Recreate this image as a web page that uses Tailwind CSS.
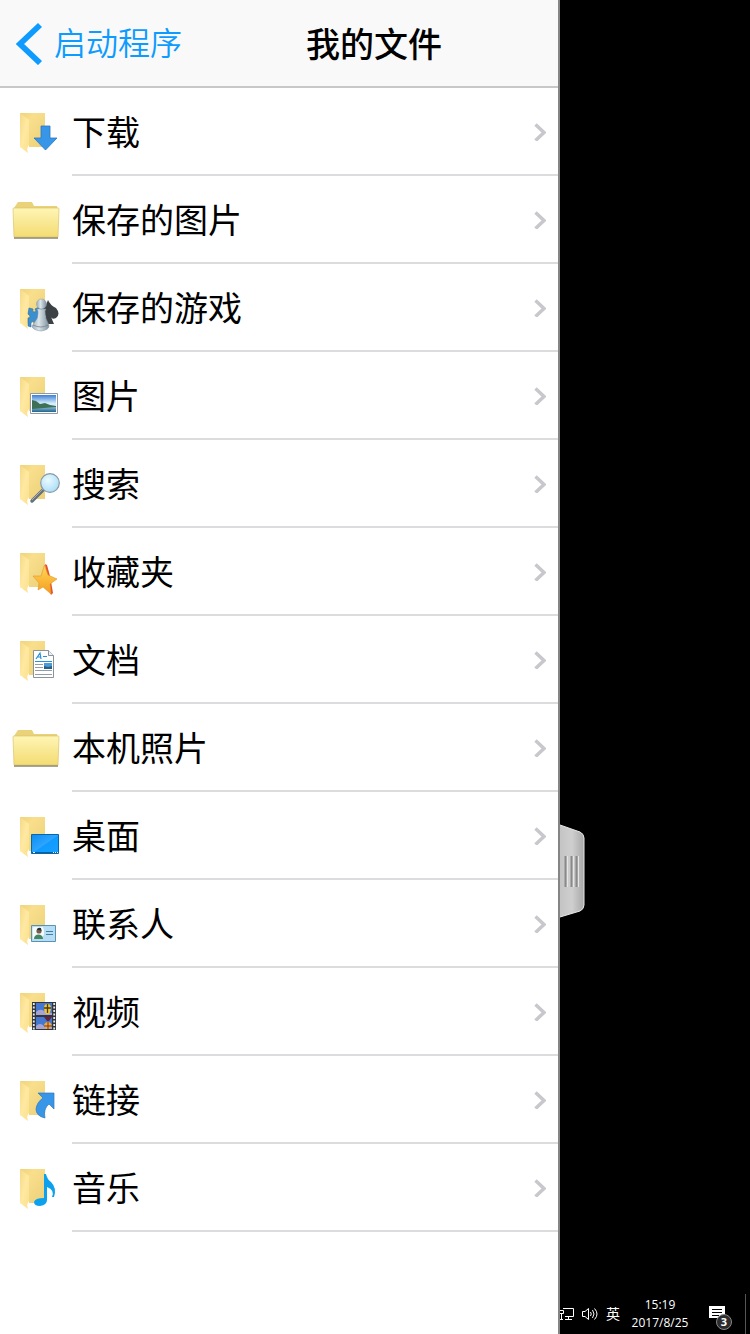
<!DOCTYPE html>
<html lang="zh-CN">
<head>
<meta charset="utf-8">
<meta name="viewport" content="width=device-width, initial-scale=1">
<title>我的文件</title>
<script src="https://cdn.jsdelivr.net/npm/@tailwindcss/browser@4"></script>
</head>
<body class="flex min-h-screen bg-black font-['Noto_Sans_CJK_SC',sans-serif] text-black">

<!-- Shared shapes and gradients -->
<svg class="absolute size-0" aria-hidden="true">
  <defs>
    <linearGradient id="back" x1="0" y1="0" x2="1" y2="1"><stop offset="0" stop-color="#efd27c"/><stop offset=".3" stop-color="#f9df8c"/><stop offset="1" stop-color="#ecd07b"/></linearGradient>
    <linearGradient id="flap" x1="0" y1="0" x2="1" y2="1"><stop offset="0" stop-color="#f4d985"/><stop offset=".5" stop-color="#ffe9a2"/><stop offset="1" stop-color="#fbdf89"/></linearGradient>
    <linearGradient id="front" x1="0" y1="0" x2="0" y2="1"><stop offset="0" stop-color="#fff5b5"/><stop offset="1" stop-color="#f3dc72"/></linearGradient>
    <linearGradient id="sky" x1="0" y1="0" x2="0" y2="1"><stop offset="0" stop-color="#3f7fd6"/><stop offset=".7" stop-color="#d5eefb"/></linearGradient>
    <linearGradient id="sea" x1="0" y1="0" x2="0" y2="1"><stop offset="0" stop-color="#a6cfe0"/><stop offset="1" stop-color="#1e6390"/></linearGradient>
    <linearGradient id="screen" x1="0" y1="0" x2="1" y2="1"><stop offset="0" stop-color="#0c8cf0"/><stop offset=".5" stop-color="#2ea5ff"/><stop offset=".52" stop-color="#129bff"/><stop offset="1" stop-color="#16a0ff"/></linearGradient>
    <linearGradient id="pawn" x1="0" y1="0" x2="1" y2="0"><stop offset="0" stop-color="#9badb9"/><stop offset=".4" stop-color="#dce5ea"/><stop offset="1" stop-color="#7d909d"/></linearGradient>
    <linearGradient id="star" x1="0" y1="0" x2="0" y2="1"><stop offset="0" stop-color="#ffd95a"/><stop offset="1" stop-color="#f59c1c"/></linearGradient>
    <radialGradient id="lens" cx=".4" cy=".35" r=".7"><stop offset="0" stop-color="#eafaff"/><stop offset="1" stop-color="#a9dcf8"/></radialGradient>
    <linearGradient id="grip" x1="0" y1="0" x2="1" y2="0"><stop offset="0" stop-color="#c4c4c4"/><stop offset=".5" stop-color="#cfcfcf"/><stop offset="1" stop-color="#a8a8a8"/></linearGradient>
    <symbol id="open" viewBox="0 0 48 48">
      <path d="M8 5H33V39H17Z" fill="url(#back)"/>
      <path d="M8 5L17 12V36L15 41L16 45L8 39Z" fill="url(#flap)"/>
    </symbol>
    <symbol id="closed" viewBox="0 0 48 48">
      <path d="M2 41V12L4 9L6 6H20L22 10H45L46 14V41Z" fill="#e9d27a"/>
      <path d="M1 13Q1 12 2 12H46Q47 12 47 13L46 41H2Z" fill="url(#front)" stroke="#dcc46a" stroke-width=".7"/>
      <path d="M2 42H46" stroke="#8c8469" stroke-width="1.3"/>
    </symbol>
    <symbol id="next" viewBox="0 0 12 20"><path d="M1.500 3.500L10 11.500L1.500 19.500" fill="none" stroke="#c7c7cc" stroke-width="3.500"/></symbol>
  </defs>
</svg>

<main class="flex min-w-0 flex-1 flex-col border-r-2 border-[#858585] bg-white">
  <header class="flex h-22 items-center border-b-2 border-[#c8c8c8] bg-[#f9f9f9]">
    <a href="#" class="flex w-[190px] shrink-0 items-center gap-3 pl-4 text-[32px] leading-10 font-[350] text-[#0d9bff]">
      <svg class="h-11 w-[26px] shrink-0" viewBox="0 0 26 44" aria-hidden="true"><path d="M24 4L4 23L24 42" fill="none" stroke="#0d9bff" stroke-width="5.800"/></svg>
      <span class="pb-1 whitespace-nowrap">启动程序</span>
    </a>
    <h1 class="flex-1 text-center text-[34px] leading-10 font-medium">我的文件</h1>
  </header>

  <nav aria-label="我的文件">
    <ul class="text-[34px] leading-10">
      <li><a href="#" class="flex h-22 items-center pl-3">
        <svg class="size-12 shrink-0" viewBox="0 0 48 48" aria-hidden="true"><use href="#open"/><path d="M29 18H38V30H45L33.500 42L22 30H29Z" fill="#3896e8" stroke="#2877c0" stroke-width=".8"/></svg>
        <span class="ml-3 flex h-full flex-1 items-center justify-between border-b-2 border-[#dcdcde] pr-3">下载<svg class="h-5 w-3" aria-hidden="true"><use href="#next"/></svg></span>
      </a></li>
      <li><a href="#" class="flex h-22 items-center pl-3">
        <svg class="size-12 shrink-0" viewBox="0 0 48 48" aria-hidden="true"><use href="#closed"/></svg>
        <span class="ml-3 flex h-full flex-1 items-center justify-between border-b-2 border-[#dcdcde] pr-3">保存的图片<svg class="h-5 w-3" aria-hidden="true"><use href="#next"/></svg></span>
      </a></li>
      <li><a href="#" class="flex h-22 items-center pl-3">
        <svg class="size-12 shrink-0" viewBox="0 0 48 48" aria-hidden="true"><use href="#open"/>
          <path d="M17 24L21 25Q20 28 22 28Q25 28 23 25L27 23V40L22 42V38Q20 36 19 39V43L16 42V34Q20 33 16 30Z" fill="#3c8fce" stroke="#2b6c9f" stroke-width=".6"/>
          <path d="M36 16Q38 21 44 24Q49 30 44 34Q40 36 39 33L42 40H30L34 32Q28 31 30 25Q34 22 36 16Z" fill="#3c4146"/>
          <path d="M25 25H34L33 27Q33 34 36 39L37 42Q37 46 29 47Q20 46 20 42L22 39Q27 34 26 27Z" fill="url(#pawn)" stroke="#8393a0" stroke-width=".5"/>
          <circle cx="29.500" cy="20" r="5" fill="url(#pawn)" stroke="#8797a2" stroke-width=".5"/>
          <path d="M21 41Q29 45 36 41" fill="none" stroke="#71838f" stroke-width=".8"/></svg>
        <span class="ml-3 flex h-full flex-1 items-center justify-between border-b-2 border-[#dcdcde] pr-3">保存的游戏<svg class="h-5 w-3" aria-hidden="true"><use href="#next"/></svg></span>
      </a></li>
      <li><a href="#" class="flex h-22 items-center pl-3">
        <svg class="size-12 shrink-0" viewBox="0 0 48 48" aria-hidden="true"><use href="#open"/>
          <path d="M18.500 21.500H45.500V41.500H18.500Z" fill="#fff" stroke="#8e9ba6"/>
          <path d="M20 23H44V35H20Z" fill="url(#sky)"/><path d="M20 34H44V40H20Z" fill="url(#sea)"/>
          <path d="M20 28L24 29L28 32L33 31L38 33L44 34V35L32 36L20 37Z" fill="#3d7055"/></svg>
        <span class="ml-3 flex h-full flex-1 items-center justify-between border-b-2 border-[#dcdcde] pr-3">图片<svg class="h-5 w-3" aria-hidden="true"><use href="#next"/></svg></span>
      </a></li>
      <li><a href="#" class="flex h-22 items-center pl-3">
        <svg class="size-12 shrink-0" viewBox="0 0 48 48" aria-hidden="true"><use href="#open"/>
          <path d="M31 30L20 41" stroke="#66717a" stroke-width="3.500" stroke-linecap="round"/><path d="M32 28L20 40" stroke="#a5afb5"/>
          <circle cx="38" cy="23" r="9.300" fill="url(#lens)" stroke="#8999a5" stroke-width="1.200"/></svg>
        <span class="ml-3 flex h-full flex-1 items-center justify-between border-b-2 border-[#dcdcde] pr-3">搜索<svg class="h-5 w-3" aria-hidden="true"><use href="#next"/></svg></span>
      </a></li>
      <li><a href="#" class="flex h-22 items-center pl-3">
        <svg class="size-12 shrink-0" viewBox="0 0 48 48" aria-hidden="true"><use href="#open"/>
          <path d="M33 16L35 17L38 28L41 45L39 47L35 37Z" fill="#e5502b"/>
          <path d="M32.500 17L36 27L45 31L38 36L39 46L31 39L26 42L27 35L21 28L29 28Z" fill="url(#star)" stroke="#e49329" stroke-width=".6"/></svg>
        <span class="ml-3 flex h-full flex-1 items-center justify-between border-b-2 border-[#dcdcde] pr-3">收藏夹<svg class="h-5 w-3" aria-hidden="true"><use href="#next"/></svg></span>
      </a></li>
      <li><a href="#" class="flex h-22 items-center pl-3">
        <svg class="size-12 shrink-0" viewBox="0 0 48 48" aria-hidden="true"><use href="#open"/>
          <path d="M21.500 14.500H36.500L41.500 19.500V41.500H21.500Z" fill="#fff" stroke="#88939b"/><path d="M36.500 14.500V19.500H41.500" fill="#edf1f4" stroke="#88939b"/>
          <path d="M24 23L28 17L29 23M25.500 21H29M31 20.500H35" fill="none" stroke="#278fdb" stroke-width="1.200"/>
          <path d="M23 25.500H40" stroke="#278fdb"/><path d="M23 28.500H31M23 31.500H31M23 34.500H40M23 38.500H40" stroke="#929da5"/>
          <path d="M32 27H40V33H32Z" fill="#4c9bd7"/><path d="M32 30L36 31L40 30V33H32Z" fill="#285f83"/></svg>
        <span class="ml-3 flex h-full flex-1 items-center justify-between border-b-2 border-[#dcdcde] pr-3">文档<svg class="h-5 w-3" aria-hidden="true"><use href="#next"/></svg></span>
      </a></li>
      <li><a href="#" class="flex h-22 items-center pl-3">
        <svg class="size-12 shrink-0" viewBox="0 0 48 48" aria-hidden="true"><use href="#closed"/></svg>
        <span class="ml-3 flex h-full flex-1 items-center justify-between border-b-2 border-[#dcdcde] pr-3">本机照片<svg class="h-5 w-3" aria-hidden="true"><use href="#next"/></svg></span>
      </a></li>
      <li><a href="#" class="flex h-22 items-center pl-3">
        <svg class="size-12 shrink-0" viewBox="0 0 48 48" aria-hidden="true"><use href="#open"/>
          <path d="M19.500 22.500H46.500V41.500H19.500Z" fill="url(#screen)" stroke="#0767ad"/><path d="M20 40.500H46" stroke="#075f9f"/><path d="M21 40.500H23M41 40.500H42M43 40.500H44M45 40.500H46" stroke="#fff"/></svg>
        <span class="ml-3 flex h-full flex-1 items-center justify-between border-b-2 border-[#dcdcde] pr-3">桌面<svg class="h-5 w-3" aria-hidden="true"><use href="#next"/></svg></span>
      </a></li>
      <li><a href="#" class="flex h-22 items-center pl-3">
        <svg class="size-12 shrink-0" viewBox="0 0 48 48" aria-hidden="true"><use href="#open"/>
          <path d="M19.500 25.500H43.500V41.500H19.500Z" fill="#b5def5" stroke="#5a92b5"/><path d="M20.500 28Q21 27 22 27H31Q32.500 30 32 34L30 39H21Z" fill="#f5fafc"/>
          <circle cx="27" cy="31" r="2.600" fill="#795d4b"/><path d="M25 30Q25 27 29 28L29.500 31L27 30Z" fill="#24333a"/><path d="M22 39Q22 35 26 34.500Q31 34.500 31 39Z" fill="#458562"/>
          <path d="M34 31.500H41M34 34.500H41" stroke="#467da0"/></svg>
        <span class="ml-3 flex h-full flex-1 items-center justify-between border-b-2 border-[#dcdcde] pr-3">联系人<svg class="h-5 w-3" aria-hidden="true"><use href="#next"/></svg></span>
      </a></li>
      <li><a href="#" class="flex h-22 items-center pl-3">
        <svg class="size-12 shrink-0" viewBox="0 0 48 48" aria-hidden="true"><use href="#open"/>
          <path d="M20 14H44V42H20Z" fill="#30363b"/><path d="M21.800 15V42M42.200 15V42" stroke="#e6ebef" stroke-width="1.800" stroke-dasharray="2 1.500"/>
          <path d="M24 15H40V27H24ZM24 29H40V41H24Z" fill="#4478d0"/>
          <path d="M24 24Q28 20 32 23L40 25V27H24ZM24 38Q28 34 32 38L40 39V41H24Z" fill="#a9a3d0"/>
          <path d="M32 20Q32 16 35.500 16Q39 16 39 20Q39 23 37 26H34Q32 23 32 20Z" fill="#f4c730"/><path d="M35.500 16V25M32 20H39" stroke="#4c3b1d" stroke-width="1.300"/>
          <path d="M32 29H40L37 33H35Z" fill="#6a2038"/>
          <path d="M32 37Q33 34 36 34Q39 34 40 38L37 41H34Z" fill="#e8b02c"/><path d="M32 38H40M36 34V41" stroke="#872b3f"/></svg>
        <span class="ml-3 flex h-full flex-1 items-center justify-between border-b-2 border-[#dcdcde] pr-3">视频<svg class="h-5 w-3" aria-hidden="true"><use href="#next"/></svg></span>
      </a></li>
      <li><a href="#" class="flex h-22 items-center pl-3">
        <svg class="size-12 shrink-0" viewBox="0 0 48 48" aria-hidden="true"><use href="#open"/>
          <path d="M26 17H42V33L37 28Q31 33 33 42Q24 40 24 33Q25 26 31 22Z" fill="#3896e8" stroke="#2b78bf" stroke-width=".7"/></svg>
        <span class="ml-3 flex h-full flex-1 items-center justify-between border-b-2 border-[#dcdcde] pr-3">链接<svg class="h-5 w-3" aria-hidden="true"><use href="#next"/></svg></span>
      </a></li>
      <li><a href="#" class="flex h-22 items-center pl-3">
        <svg class="size-12 shrink-0" viewBox="0 0 48 48" aria-hidden="true"><use href="#open"/>
          <path d="M32 10H34Q35 15 39 18Q45 24 42 33H40Q43 26 35 23V36Q35 41 28 42Q22 42 22 38Q23 34 32 34Z" fill="#0da0ed"/></svg>
        <span class="ml-3 flex h-full flex-1 items-center justify-between border-b-2 border-[#dcdcde] pr-3">音乐<svg class="h-5 w-3" aria-hidden="true"><use href="#next"/></svg></span>
      </a></li>
    </ul>
  </nav>
</main>

<aside class="relative flex w-[190px] shrink-0 flex-col justify-end overflow-hidden text-white">
  <!-- Drawer handle over the remote desktop -->
  <button class="absolute top-[824px] left-0" aria-label="收起面板">
    <svg class="h-[94px] w-[25px]" viewBox="0 0 25 94" aria-hidden="true">
      <path d="M0 1L20 8Q24 10 24 14V81Q24 85 20 87L0 93Z" fill="url(#grip)"/>
      <path d="M0 1L20 8Q24 10 24 14V81Q24 85 20 87L0 93" fill="none" stroke="#e8e8e8"/>
      <path d="M5.500 32V63M11.500 32V63M16.500 32V63" stroke="#8a8a8a" stroke-width="2"/><path d="M7.500 32V63M13.500 32V63M18.500 32V63" stroke="#e5e5e5"/>
    </svg>
  </button>

  <footer class="flex h-10 items-center font-['Open_Sans','Noto_Sans_CJK_SC',sans-serif] text-xs">
    <svg class="h-4 w-[15px] shrink-0" viewBox="0 0 15 16" fill="none" stroke="#fff" role="img" aria-label="网络"><path d="M3 2.500H13.500V10.500H5M8.500 11V13.500M5 13.500H12M0 4.500H3.500V7.500H0M1.500 8V13.500M0 13.500H3"/></svg>
    <svg class="ml-1.5 h-4 w-[18px] shrink-0" viewBox="0 0 18 16" fill="none" stroke="#fff" role="img" aria-label="音量"><path d="M1.500 5.500H4L7.500 2.500V13.500L4 10.500H1.500ZM9.500 6Q11 8 9.500 10M11.500 4Q14.500 8 11.500 12M13.500 2.500Q18.500 8 13.500 13.500"/></svg>
    <span class="ml-[7px] text-sm leading-4">英</span>
    <time class="ml-[9px] flex w-[62px] shrink-0 flex-col items-center text-xs leading-[18px]" datetime="2017-08-25T15:19"><span>15:19</span><span>2017/8/25</span></time>
    <span class="relative ml-[18px] h-6 w-6 shrink-0">
      <svg class="size-6" viewBox="0 0 24 24" aria-hidden="true"><path d="M0 4H16V16H11L8 19V16H0Z" fill="#fff"/><path d="M3 7.500H13M3 10.500H13M3 13.500H10" stroke="#000"/></svg>
      <span class="absolute top-3 left-[7px] flex size-4 items-center justify-center rounded-full border border-[#888] bg-[#2d2d2d] text-[11px] leading-4 font-bold">3</span>
    </span>
    <span class="ml-auto mr-1 h-full w-px bg-[#555]"></span>
  </footer>
</aside>
</body>
</html>
